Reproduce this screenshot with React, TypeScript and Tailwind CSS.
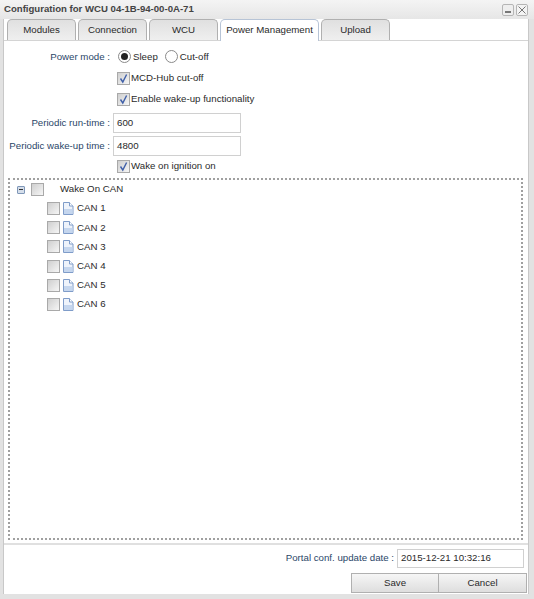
import React from "react";

function Check({ checked }: { checked?: boolean }) {
  return (
    <span className="w-[13px] h-[13px] shrink-0 border border-[#a9a9a9] bg-gradient-to-br from-[#cfcfcf] to-[#f6f6f6] flex items-center justify-center">
      {checked && (
        <svg width="11" height="11" viewBox="0 0 11 11" fill="none">
          <path d="M2.5 5.5 L4.8 9 L8.6 1.5" stroke="#3f5fa8" strokeWidth="1.4" />
        </svg>
      )}
    </span>
  );
}

function Radio({ checked }: { checked?: boolean }) {
  return (
    <span className="w-[13px] h-[13px] shrink-0 rounded-full border border-[#8a8a8a] bg-white flex items-center justify-center">
      {checked && <span className="w-[7px] h-[7px] rounded-full bg-[#222]" />}
    </span>
  );
}

function Doc() {
  return (
    <svg width="12" height="13" viewBox="0 0 12 13" fill="none" className="shrink-0">
      <path d="M1.5 0.5 H7.5 L11 4 V12.5 H1.5 Z" fill="#eef3fb" stroke="#7f9cc9" />
      <path d="M7.5 0.5 V4 H11" fill="#fff" stroke="#7f9cc9" />
      <path d="M2 7 H10.5 V12 H2 Z" fill="#c5d6ee" />
    </svg>
  );
}

function Tab({ label, w, active }: { label: string; w: string; active?: boolean }) {
  return (
    <div
      className={
        active
          ? `${w} h-[22px] -mb-px rounded-t-[5px] border border-b-0 border-[#b7c4d6] bg-white flex items-center justify-center z-10`
          : `${w} h-[21px] rounded-t-[5px] border border-b-0 border-[#b0b0b0] bg-gradient-to-b from-[#e0e0e0] to-[#efefef] flex items-center justify-center`
      }
    >
      {label}
    </div>
  );
}

const labelCls = "text-[#2a4668] text-right whitespace-nowrap w-[102px]";

export default function App() {
  return (
    <div className="w-[534px] h-[599px] bg-[#e2e2e2] flex flex-col overflow-hidden text-[9.7px] text-[#2a2a2a] font-['Liberation_Sans',Arial,sans-serif]">
      <div className="h-[19px] shrink-0 flex items-center justify-between pl-[4px] pr-[6px] bg-gradient-to-b from-[#f4f4f4] to-[#e6e6e6]">
        <span className="font-bold text-[#444] text-[9.6px]">Configuration for WCU 04-1B-94-00-0A-71</span>
        <div className="flex gap-[2px]">
          <span className="w-[12px] h-[12px] border border-[#b5b5b5] rounded-[2px] bg-[#eee] flex items-end justify-center pb-[2px]">
            <span className="w-[6px] h-[2px] bg-[#777]" />
          </span>
          <span className="w-[12px] h-[12px] border border-[#b5b5b5] rounded-[2px] bg-[#f4f4f4] flex items-center justify-center">
            <svg width="8" height="8" viewBox="0 0 8 8"><path d="M0.5 0.5 L7.5 7.5 M7.5 0.5 L0.5 7.5" stroke="#777" strokeWidth="1" /></svg>
          </span>
        </div>
      </div>

      <div className="ml-[3px] mr-[5px] flex-1 flex flex-col bg-white border-x border-[#c8c8c8]">
        <div className="h-[21px] shrink-0 flex items-end gap-[2px] pl-[3px] border-b border-[#d4d4d4] box-content">
          <Tab label="Modules" w="w-[69px]" />
          <Tab label="Connection" w="w-[69px]" />
          <Tab label="WCU" w="w-[69px]" />
          <Tab label="Power Management" w="w-[99px]" active />
          <Tab label="Upload" w="w-[69px]" />
        </div>

        <div className="h-[504px] shrink-0 flex flex-col pl-[4px] pr-[5px] pt-[6px] pb-[3px] border-b-2 border-[#e0e0e0]">
          <div className="flex items-center h-[20px]">
            <span className={labelCls}>Power mode :</span>
            <span className="ml-[8px] flex items-center gap-[2px]"><Radio checked />Sleep</span>
            <span className="ml-[7px] flex items-center gap-[2px]"><Radio />Cut-off</span>
          </div>
          <div className="flex items-center gap-[1px] h-[21px] mt-[1px] ml-[109px]"><Check checked />MCD-Hub cut-off</div>
          <div className="flex items-center gap-[1px] h-[21px] ml-[109px]"><Check checked />Enable wake-up functionality</div>
          <div className="flex items-center h-[20px] mt-[3px]">
            <span className={labelCls}>Periodic run-time :</span>
            <div className="ml-[3px] w-[128px] h-[20px] border border-[#d0d0d0] pl-[3px] flex items-center">600</div>
          </div>
          <div className="flex items-center h-[20px] mt-[3px]">
            <span className={labelCls}>Periodic wake-up time :</span>
            <div className="ml-[3px] w-[128px] h-[20px] border border-[#d0d0d0] pl-[3px] flex items-center">4800</div>
          </div>
          <div className="flex items-center gap-[1px] h-[20px] ml-[109px]"><Check checked />Wake on ignition on</div>

          <div className="flex-1 mt-[2px] border-2 border-dotted border-[#a0a0a0] flex flex-col">
            <div className="flex items-center h-[19px] pl-[7px]">
              <span className="w-[8px] h-[8px] border border-[#7f97b8] rounded-[1px] bg-[#d5deea] flex items-center justify-center">
                <span className="w-[4px] h-[1px] bg-[#333]" />
              </span>
              <span className="ml-[6px]"><Check /></span>
              <span className="ml-[16px]">Wake On CAN</span>
            </div>
            {["CAN 1", "CAN 2", "CAN 3", "CAN 4", "CAN 5", "CAN 6"].map((c) => (
              <div key={c} className="flex items-center h-[19.2px] pl-[37px]">
                <Check />
                <span className="ml-[2px]"><Doc /></span>
                <span className="ml-[3px]">{c}</span>
              </div>
            ))}
          </div>
        </div>

        <div className="flex-1 flex flex-col items-end pr-[1px] pt-[4px]">
          <div className="flex items-center h-[19px] mr-[3px]">
            <span className="text-[#2a4668]">Portal conf. update date :</span>
            <div className="ml-[3px] w-[127px] h-[19px] border border-[#d0d0d0] pl-[3px] flex items-center">2015-12-21 10:32:16</div>
          </div>
          <div className="flex mt-[5px]">
            <div className="w-[88px] h-[20px] border border-[#b0b0b0] bg-gradient-to-b from-[#f6f6f6] to-[#dedede] flex items-center justify-center">Save</div>
            <div className="w-[88px] h-[20px] border border-l-0 border-[#b0b0b0] bg-gradient-to-b from-[#f6f6f6] to-[#dedede] flex items-center justify-center">Cancel</div>
          </div>
        </div>
      </div>
      <div className="h-[5px] shrink-0" />
    </div>
  );
}
